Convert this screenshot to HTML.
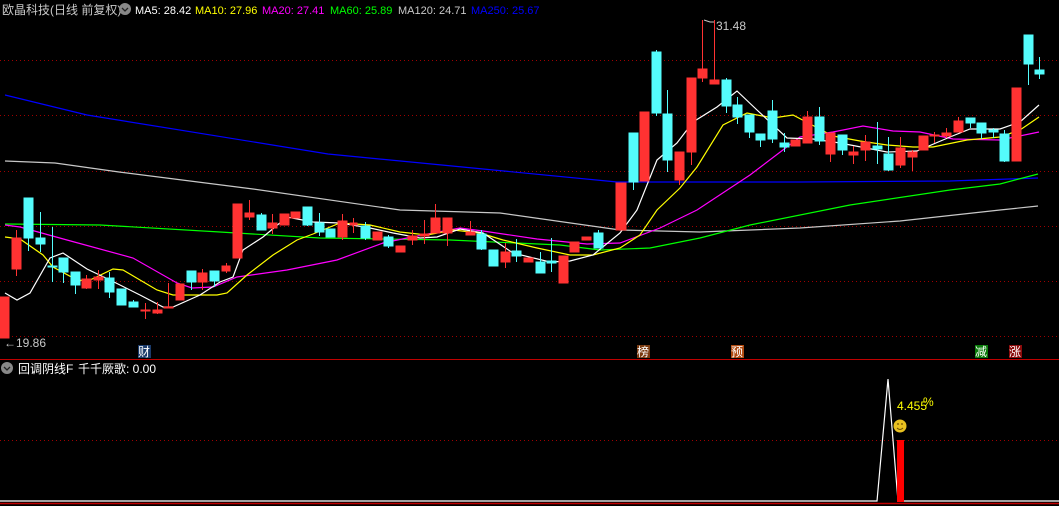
<!DOCTYPE html>
<html><head><meta charset="utf-8"><style>
html,body{margin:0;padding:0;background:#000;width:1059px;height:506px;overflow:hidden}
svg{display:block}
text{font-family:"Liberation Sans","Noto Sans CJK SC",sans-serif;font-size:12px}
.m{font-size:11px}
</style></head><body>
<svg width="1059" height="506" viewBox="0 0 1059 506" xmlns="http://www.w3.org/2000/svg">
<rect width="1059" height="506" fill="#000"/>
<g stroke="#a00000" stroke-dasharray="1,3" stroke-width="1">
<line x1="0" y1="60.5" x2="1059" y2="60.5"/>
<line x1="0" y1="115.5" x2="1059" y2="115.5"/>
<line x1="0" y1="171.5" x2="1059" y2="171.5"/>
<line x1="0" y1="226.5" x2="1059" y2="226.5"/>
<line x1="0" y1="281.5" x2="1059" y2="281.5"/>
<line x1="0" y1="336.5" x2="1059" y2="336.5"/>
<line x1="0" y1="440.5" x2="1059" y2="440.5"/>
</g>
<line x1="0" y1="359.5" x2="1059" y2="359.5" stroke="#c00000"/>
<line x1="0" y1="503.5" x2="1059" y2="503.5" stroke="#c00000" stroke-width="1.5"/>

<g fill="none" stroke-width="1.2">
<polyline stroke="#0000ff" points="5,95 87,115 328,154 617,182 800,182 950,181 1038,178"/>
<polyline stroke="#c8c8c8" points="5,161 55,163 119,172 253,189 400,210 500,213 620,230 700,232 800,228 900,221 1000,210 1038,206"/>
<polyline stroke="#00ff00" points="5,224 100,225 220,232 320,238 450,240 560,245 600,250 650,248 700,238 750,225 850,205 950,190 1000,184 1038,174"/>
<polyline stroke="#ff00ff" points="5,225 20,227 67,240 133,258 177,283 192,288 213,287 237,277 287,270 337,260 383,243 407,238 433,233 460,228 483,231 537,239 587,244 620,243 660,228 697,210 750,175 800,137 833,132 863,126 893,131 920,132 953,139 1000,140 1039,132"/>
<polyline stroke="#ffff00" points="5,237 20,239 43,255 53,267 77,280 88,281 113,269 123,270 140,280 157,290 173,295 217,295 227,293 247,275 273,255 297,240 313,234 340,223 370,225 400,232 427,235 453,230 480,233 503,240 537,248 570,255 593,255 620,248 640,235 657,210 680,188 697,167 723,125 747,113 773,118 793,115 833,136 860,141 887,145 913,147 933,147 967,140 1000,137 1020,130 1039,117"/>
<polyline stroke="#ffffff" points="5,293 17,300 30,293 50,258 63,253 87,269 110,280 140,295 163,307 173,307 200,295 220,282 233,277 243,250 263,237 287,217 313,222 340,223 370,228 393,233 420,238 437,237 460,229 483,233 513,253 550,262 570,261 593,255 620,233 637,210 657,160 677,143 693,122 717,107 737,91 757,110 787,138 813,139 840,143 887,152 917,151 950,137 970,129 1000,129 1020,122 1039,105"/>
</g>

<g stroke="#ff3232" fill="#ff3232" stroke-width="1">
<rect x="0" y="297" width="9" height="41"/>
<line x1="16.5" y1="230" x2="16.5" y2="276"/><rect x="12" y="238" width="9" height="31"/>
<line x1="86.5" y1="275" x2="86.5" y2="289"/><rect x="82" y="279" width="9" height="9"/>
<line x1="98.5" y1="270" x2="98.5" y2="289"/><rect x="94" y="277" width="9" height="3"/>
<line x1="145.5" y1="303" x2="145.5" y2="319"/><rect x="141" y="310" width="9" height="1"/>
<line x1="157.5" y1="302" x2="157.5" y2="314"/><rect x="153" y="310" width="9" height="3"/>
<line x1="168.5" y1="283" x2="168.5" y2="308"/><rect x="164" y="307" width="9" height="1"/>
<rect x="176" y="284" width="8" height="16"/>
<line x1="202.5" y1="269" x2="202.5" y2="290"/><rect x="198" y="273" width="9" height="9"/>
<line x1="226.5" y1="263" x2="226.5" y2="273"/><rect x="222" y="266" width="8" height="5"/>
<rect x="233" y="204" width="9" height="54"/>
<line x1="249.5" y1="200" x2="249.5" y2="220"/><rect x="245" y="213" width="9" height="4"/>
<line x1="272.5" y1="214" x2="272.5" y2="234"/><rect x="268" y="223" width="9" height="5"/>
<rect x="280" y="214" width="9" height="11"/>
<rect x="291" y="212" width="9" height="6"/>
<line x1="342.5" y1="214" x2="342.5" y2="240"/><rect x="338" y="221" width="9" height="16"/>
<line x1="353.5" y1="218" x2="353.5" y2="233"/><rect x="350" y="223" width="7" height="2"/>
<rect x="373" y="232" width="9" height="8"/>
<rect x="396" y="246" width="9" height="6"/>
<line x1="412.5" y1="230" x2="412.5" y2="245"/><rect x="408" y="236" width="9" height="4"/>
<line x1="424.5" y1="220" x2="424.5" y2="244"/><rect x="420" y="234" width="9" height="2"/>
<line x1="435.5" y1="204" x2="435.5" y2="233"/><rect x="431" y="218" width="9" height="15"/>
<line x1="447.5" y1="218" x2="447.5" y2="246"/><rect x="443" y="218" width="9" height="15"/>
<line x1="470.5" y1="221" x2="470.5" y2="235"/><rect x="466" y="232" width="9" height="3"/>
<line x1="505.5" y1="243" x2="505.5" y2="268"/><rect x="501" y="252" width="9" height="10"/>
<rect x="524" y="258" width="9" height="4"/>
<rect x="559" y="256" width="9" height="27"/>
<rect x="570" y="242" width="9" height="10"/>
<rect x="582" y="237" width="9" height="3"/>
<rect x="616" y="183" width="10" height="47"/>
<rect x="640" y="112" width="9" height="69"/>
<line x1="679.5" y1="152" x2="679.5" y2="185"/><rect x="675" y="152" width="9" height="28"/>
<line x1="691.5" y1="78" x2="691.5" y2="165"/><rect x="687" y="78" width="9" height="74"/>
<line x1="702.5" y1="20" x2="702.5" y2="82"/><rect x="698" y="69" width="9" height="9"/>
<line x1="714.5" y1="20" x2="714.5" y2="84"/><rect x="710" y="80" width="9" height="4"/>
<rect x="791" y="140" width="9" height="6"/>
<line x1="807.5" y1="111" x2="807.5" y2="143"/><rect x="803" y="117" width="9" height="26"/>
<line x1="830.5" y1="133" x2="830.5" y2="162"/><rect x="826" y="133" width="9" height="21"/>
<line x1="853.5" y1="146" x2="853.5" y2="164"/><rect x="849" y="152" width="9" height="3"/>
<line x1="865.5" y1="135" x2="865.5" y2="161"/><rect x="861" y="142" width="9" height="8"/>
<line x1="900.5" y1="137" x2="900.5" y2="168"/><rect x="896" y="148" width="9" height="17"/>
<line x1="912.5" y1="150" x2="912.5" y2="171"/><rect x="908" y="152" width="9" height="5"/>
<rect x="919" y="136" width="9" height="14"/>
<line x1="934.5" y1="132" x2="934.5" y2="143"/><rect x="930" y="135" width="9" height="1"/>
<line x1="946.5" y1="128" x2="946.5" y2="138"/><rect x="942" y="133" width="9" height="3"/>
<line x1="958.5" y1="117" x2="958.5" y2="132"/><rect x="954" y="121" width="9" height="11"/>
<rect x="1012" y="88" width="9" height="73"/>
</g>
<g stroke="#54fcfc" fill="#54fcfc" stroke-width="1">
<line x1="28.5" y1="198" x2="28.5" y2="251"/><rect x="24" y="198" width="9" height="40"/>
<line x1="40.5" y1="212" x2="40.5" y2="252"/><rect x="36" y="238" width="9" height="6"/>
<line x1="52.5" y1="227" x2="52.5" y2="282"/><rect x="48" y="266" width="9" height="1"/>
<line x1="63.5" y1="258" x2="63.5" y2="283"/><rect x="59" y="258" width="9" height="14"/>
<line x1="75.5" y1="272" x2="75.5" y2="294"/><rect x="71" y="272" width="9" height="13"/>
<line x1="109.5" y1="272" x2="109.5" y2="298"/><rect x="105" y="278" width="9" height="14"/>
<rect x="117" y="289" width="9" height="16"/>
<line x1="133.5" y1="300" x2="133.5" y2="307"/><rect x="129" y="302" width="9" height="5"/>
<line x1="191.5" y1="271" x2="191.5" y2="290"/><rect x="187" y="271" width="9" height="11"/>
<line x1="214.5" y1="271" x2="214.5" y2="287"/><rect x="210" y="271" width="9" height="10"/>
<line x1="261.5" y1="213" x2="261.5" y2="230"/><rect x="257" y="215" width="9" height="15"/>
<line x1="307.5" y1="207" x2="307.5" y2="226"/><rect x="303" y="207" width="9" height="18"/>
<line x1="319.5" y1="213" x2="319.5" y2="236"/><rect x="315" y="223" width="9" height="9"/>
<rect x="326" y="229" width="9" height="8"/>
<line x1="365.5" y1="222" x2="365.5" y2="240"/><rect x="361" y="226" width="9" height="12"/>
<line x1="388.5" y1="235" x2="388.5" y2="248"/><rect x="384" y="237" width="9" height="9"/>
<line x1="481.5" y1="230" x2="481.5" y2="250"/><rect x="477" y="234" width="9" height="15"/>
<rect x="489" y="250" width="9" height="16"/>
<line x1="516.5" y1="239" x2="516.5" y2="262"/><rect x="512" y="251" width="9" height="5"/>
<line x1="540.5" y1="252" x2="540.5" y2="273"/><rect x="536" y="262" width="9" height="11"/>
<line x1="551.5" y1="238" x2="551.5" y2="272"/><rect x="547" y="261" width="9" height="2"/>
<line x1="598.5" y1="230" x2="598.5" y2="248"/><rect x="594" y="233" width="9" height="15"/>
<line x1="633.5" y1="133" x2="633.5" y2="190"/><rect x="629" y="133" width="9" height="49"/>
<line x1="656.5" y1="50" x2="656.5" y2="116"/><rect x="652" y="52" width="9" height="61"/>
<line x1="667.5" y1="90" x2="667.5" y2="172"/><rect x="663" y="114" width="9" height="46"/>
<line x1="726.5" y1="78" x2="726.5" y2="113"/><rect x="722" y="80" width="9" height="26"/>
<line x1="737.5" y1="97" x2="737.5" y2="124"/><rect x="733" y="105" width="9" height="12"/>
<line x1="749.5" y1="115" x2="749.5" y2="138"/><rect x="745" y="115" width="9" height="17"/>
<line x1="760.5" y1="134" x2="760.5" y2="147"/><rect x="756" y="134" width="9" height="6"/>
<line x1="772.5" y1="100" x2="772.5" y2="143"/><rect x="768" y="111" width="9" height="28"/>
<line x1="784.5" y1="133" x2="784.5" y2="152"/><rect x="780" y="143" width="9" height="4"/>
<line x1="819.5" y1="107" x2="819.5" y2="145"/><rect x="815" y="117" width="9" height="24"/>
<line x1="842.5" y1="135" x2="842.5" y2="155"/><rect x="838" y="135" width="9" height="15"/>
<line x1="877.5" y1="122" x2="877.5" y2="164"/><rect x="873" y="146" width="9" height="3"/>
<line x1="888.5" y1="137" x2="888.5" y2="171"/><rect x="884" y="154" width="9" height="16"/>
<line x1="970.5" y1="118" x2="970.5" y2="128"/><rect x="966" y="118" width="9" height="5"/>
<line x1="981.5" y1="123" x2="981.5" y2="139"/><rect x="977" y="123" width="9" height="10"/>
<line x1="993.5" y1="128" x2="993.5" y2="138"/><rect x="989" y="130" width="9" height="2"/>
<line x1="1004.5" y1="130" x2="1004.5" y2="162"/><rect x="1000" y="134" width="9" height="27"/>
<line x1="1028.5" y1="35" x2="1028.5" y2="85"/><rect x="1024" y="35" width="9" height="29"/>
<line x1="1039.5" y1="57" x2="1039.5" y2="79"/><rect x="1035" y="70" width="9" height="4"/>
</g>

<polyline points="704,20 710,22 714,22" fill="none" stroke="#c8c8c8"/>
<text x="716" y="30" fill="#c8c8c8">31.48</text>
<text x="4" y="347" fill="#c8c8c8">←19.86</text>

<rect x="138" y="345" width="13" height="13" fill="#1a3a6a"/><text x="138" y="356" fill="#fff">财</text>
<rect x="637" y="345" width="13" height="13" fill="#7a3a10"/><text x="637" y="356" fill="#fff">榜</text>
<rect x="731" y="345" width="13" height="13" fill="#b04a10"/><text x="731" y="356" fill="#fff">预</text>
<rect x="975" y="345" width="13" height="13" fill="#0a7a0a"/><text x="975" y="356" fill="#fff">减</text>
<rect x="1009" y="345" width="13" height="13" fill="#8a0a0a"/><text x="1009" y="356" fill="#fff">涨</text>

<text x="2" y="14" fill="#c8c8c8">欧晶科技(日线 前复权)</text>
<circle cx="125" cy="9" r="6" fill="#888"/><path d="M122,8 l3,3 l3,-3" stroke="#222" fill="none" stroke-width="1.3"/>
<text class="m" x="135" y="14" fill="#fff">MA5: 28.42</text>
<text class="m" x="195" y="14" fill="#ffff00">MA10: 27.96</text>
<text class="m" x="262" y="14" fill="#ff00ff">MA20: 27.41</text>
<text class="m" x="330" y="14" fill="#00ff00">MA60: 25.89</text>
<text class="m" x="398" y="14" fill="#c8c8c8">MA120: 24.71</text>
<text class="m" x="471" y="14" fill="#0000ff">MA250: 25.67</text>

<circle cx="7" cy="368" r="6" fill="#888"/><path d="M4,367 l3,3 l3,-3" stroke="#222" fill="none" stroke-width="1.3"/>
<text x="18" y="373" fill="#fff">回调阴线F</text>
<text x="78" y="373" fill="#fff">千千厥歌: 0.00</text>
<polyline points="0,501 877,501 888,379 898,501 1059,501" fill="none" stroke="#fff" stroke-width="1.2"/>
<rect x="897" y="440" width="7" height="62" fill="#ff0000"/>
<circle cx="900" cy="426" r="6.5" fill="#e8c020"/>
<circle cx="898" cy="424" r="0.9" fill="#6a4a00"/><circle cx="902" cy="424" r="0.9" fill="#6a4a00"/>
<path d="M897,428 q3,3 6,0" stroke="#6a4a00" fill="none"/>
<text x="897" y="410" fill="#ffff00">4.455</text><text x="923" y="406" fill="#ffff00" font-size="11">%</text>
</svg>
</body></html>
